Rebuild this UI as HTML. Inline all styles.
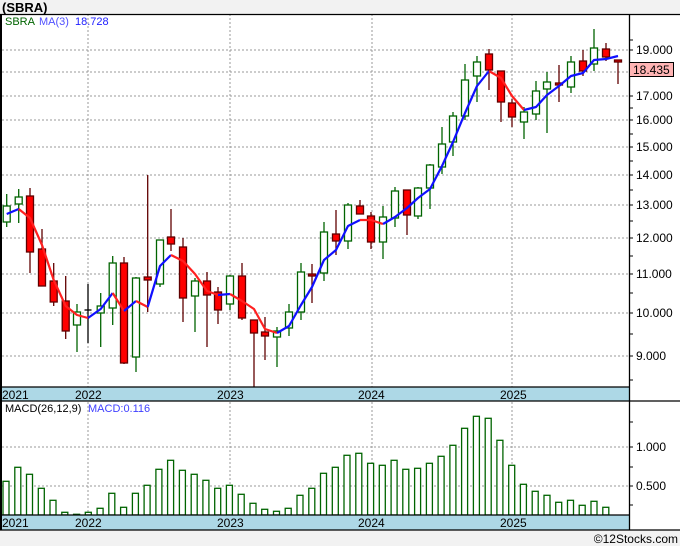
<!DOCTYPE html>
<html><head><meta charset="utf-8"><style>
html,body{margin:0;padding:0;background:#f2f2f2;}
svg{display:block;font-family:"Liberation Sans",sans-serif;}
</style></head><body>
<svg width="680" height="546" viewBox="0 0 680 546" xmlns="http://www.w3.org/2000/svg">
<rect x="0" y="0" width="680" height="546" fill="#f2f2f2"/>
<text x="2" y="12" font-size="13" font-weight="bold" fill="#000">(SBRA)</text>
<rect x="0" y="14" width="680" height="516" fill="#fff"/>
<g stroke="#999" stroke-width="1" stroke-dasharray="2,2" fill="none">
<line x1="2" y1="50" x2="629" y2="50"/><line x1="2" y1="72" x2="629" y2="72"/><line x1="2" y1="96" x2="629" y2="96"/>
<line x1="2" y1="120" x2="629" y2="120"/><line x1="2" y1="147" x2="629" y2="147"/><line x1="2" y1="175" x2="629" y2="175"/>
<line x1="2" y1="205" x2="629" y2="205"/><line x1="2" y1="238" x2="629" y2="238"/><line x1="2" y1="274" x2="629" y2="274"/>
<line x1="2" y1="313" x2="629" y2="313"/><line x1="2" y1="356" x2="629" y2="356"/>
<line x1="2" y1="447" x2="629" y2="447"/><line x1="2" y1="486" x2="629" y2="486"/>
<line x1="88" y1="14" x2="88" y2="530"/><line x1="230" y1="14" x2="230" y2="530"/>
<line x1="372" y1="14" x2="372" y2="530"/><line x1="512" y1="14" x2="512" y2="530"/>
</g>
<!-- candles -->
<g stroke-width="1.3">
<g stroke="#006400" fill="#fff">
<line x1="6.7" y1="194" x2="6.7" y2="227"/><rect x="3.2" y="206" width="7" height="16"/>
<line x1="18.7" y1="189" x2="18.7" y2="223"/><rect x="15.2" y="197" width="7" height="7"/>
<line x1="77" y1="304" x2="77" y2="352"/><rect x="73.5" y="312" width="7" height="13"/>
<line x1="100.7" y1="293" x2="100.7" y2="347"/><rect x="97.2" y="306" width="7" height="7"/>
<line x1="112.7" y1="256" x2="112.7" y2="325"/><rect x="109.2" y="263" width="7" height="45"/>
<line x1="136" y1="277" x2="136" y2="372"/><rect x="132.5" y="278" width="7" height="79"/>
<line x1="160" y1="240" x2="160" y2="287"/><rect x="156.5" y="240" width="7" height="44"/>
<line x1="195" y1="278" x2="195" y2="332"/><rect x="191.5" y="281" width="7" height="15"/>
<line x1="230" y1="275" x2="230" y2="310"/><rect x="226.5" y="276" width="7" height="28"/>
<line x1="277" y1="327" x2="277" y2="367"/><rect x="273.5" y="331" width="7" height="6"/>
<line x1="289" y1="304" x2="289" y2="336"/><rect x="285.5" y="312" width="7" height="16"/>
<line x1="301" y1="263" x2="301" y2="320"/><rect x="297.5" y="272" width="7" height="40"/>
<line x1="324" y1="222" x2="324" y2="281"/><rect x="320.5" y="232" width="7" height="41"/>
<line x1="348" y1="203" x2="348" y2="249"/><rect x="344.5" y="205" width="7" height="36"/>
<line x1="383" y1="206" x2="383" y2="259"/><rect x="379.5" y="217" width="7" height="25"/>
<line x1="395" y1="187" x2="395" y2="227"/><rect x="391.5" y="191" width="7" height="27"/>
<line x1="418" y1="187" x2="418" y2="219"/><rect x="414.5" y="188" width="7" height="28"/>
<line x1="430" y1="164" x2="430" y2="209"/><rect x="426.5" y="165" width="7" height="23"/>
<line x1="442" y1="127" x2="442" y2="174"/><rect x="438.5" y="144" width="7" height="23"/>
<line x1="453" y1="112" x2="453" y2="156"/><rect x="449.5" y="116" width="7" height="26"/>
<line x1="465" y1="64" x2="465" y2="120"/><rect x="461.5" y="80" width="7" height="36"/>
<line x1="477" y1="56" x2="477" y2="102"/><rect x="473.5" y="62" width="7" height="14"/>
<line x1="524" y1="107" x2="524" y2="139"/><rect x="520.5" y="112" width="7" height="10"/>
<line x1="536" y1="81" x2="536" y2="120"/><rect x="532.5" y="91" width="7" height="23"/>
<line x1="547" y1="72" x2="547" y2="133"/><rect x="543.5" y="82" width="7" height="7"/>
<line x1="571" y1="56" x2="571" y2="93"/><rect x="567.5" y="62" width="7" height="25"/>
<line x1="594" y1="29" x2="594" y2="71"/><rect x="590.5" y="48" width="7" height="16"/>
</g>
<g stroke="#600000" fill="#ff0000">
<line x1="30" y1="188" x2="30" y2="273"/><rect x="26.5" y="196" width="7" height="56"/>
<line x1="42" y1="229" x2="42" y2="286"/><rect x="38.5" y="249" width="7" height="37"/>
<line x1="53.7" y1="263" x2="53.7" y2="306"/><rect x="50.2" y="281" width="7" height="21"/>
<line x1="65.7" y1="276" x2="65.7" y2="339"/><rect x="62.2" y="301" width="7" height="30"/>
<line x1="124" y1="257" x2="124" y2="364"/><rect x="120.5" y="263" width="7" height="100"/>
<line x1="147.7" y1="175" x2="147.7" y2="312"/><rect x="144.2" y="277" width="7" height="3"/>
<line x1="171" y1="209" x2="171" y2="251"/><rect x="167.5" y="237" width="7" height="7"/>
<line x1="183" y1="238" x2="183" y2="322"/><rect x="179.5" y="247" width="7" height="51"/>
<line x1="207" y1="272" x2="207" y2="347"/><rect x="203.5" y="281" width="7" height="14"/>
<line x1="218" y1="287" x2="218" y2="324"/><rect x="214.5" y="292" width="7" height="18"/>
<line x1="242" y1="263" x2="242" y2="320"/><rect x="238.5" y="276" width="7" height="42"/>
<line x1="254" y1="320" x2="254" y2="387"/><rect x="250.5" y="320" width="7" height="13"/>
<line x1="265" y1="317" x2="265" y2="360"/><rect x="261.5" y="332" width="7" height="4"/>
<line x1="312" y1="264" x2="312" y2="303"/><rect x="308.5" y="274" width="7" height="2"/>
<line x1="336" y1="210" x2="336" y2="255"/><rect x="332.5" y="234" width="7" height="7"/>
<line x1="360" y1="200" x2="360" y2="214"/><rect x="356.5" y="206" width="7" height="8"/>
<line x1="371" y1="212" x2="371" y2="249"/><rect x="367.5" y="216" width="7" height="26"/>
<line x1="407" y1="190" x2="407" y2="235"/><rect x="403.5" y="190" width="7" height="25"/>
<line x1="489" y1="49" x2="489" y2="90"/><rect x="485.5" y="54" width="7" height="16"/>
<line x1="501" y1="71" x2="501" y2="122"/><rect x="497.5" y="71" width="7" height="31"/>
<line x1="512" y1="99" x2="512" y2="127"/><rect x="508.5" y="103" width="7" height="14"/>
<line x1="559" y1="65" x2="559" y2="102"/><rect x="555.5" y="83" width="7" height="2"/>
<line x1="583" y1="50" x2="583" y2="76"/><rect x="579.5" y="61" width="7" height="10"/>
<line x1="606" y1="43" x2="606" y2="61"/><rect x="602.5" y="49" width="7" height="8"/>
<line x1="618" y1="60" x2="618" y2="84"/><rect x="614.5" y="60" width="7" height="2"/>
</g>
<g stroke="#000"><line x1="88" y1="284" x2="88" y2="343"/><line x1="84.5" y1="310" x2="91.5" y2="310"/></g>
</g>
<!-- MA -->
<g fill="none" stroke-width="2.2" stroke-linejoin="round">
<polyline stroke="#1010ff" points="6.7,214 18.7,209"/>
<polyline stroke="#ff2020" points="18.7,209 30,218 42,245 53.7,280 65.7,306 77,315 88,318"/>
<polyline stroke="#1010ff" points="88,318 100.7,309 112.7,293"/>
<polyline stroke="#ff2020" points="112.7,293 124,311"/>
<polyline stroke="#1010ff" points="124,311 136,301"/>
<polyline stroke="#ff2020" points="136,301 147.7,307"/>
<polyline stroke="#1010ff" points="147.7,307 160,266 171,255"/>
<polyline stroke="#ff2020" points="171,255 183,261 195,274 207,291 218,295"/>
<polyline stroke="#1010ff" points="218,295 230,294"/>
<polyline stroke="#ff2020" points="230,294 242,301 254,309 265,329 277,333"/>
<polyline stroke="#1010ff" points="277,333 289,326 301,305 312,287 324,260 336,250 348,226 360,220"/>
<polyline stroke="#ff2020" points="360,220 371,220 383,224"/>
<polyline stroke="#1010ff" points="383,224 395,217 407,208 418,198 430,189 442,166 453,142 465,113 477,86 489,71"/>
<polyline stroke="#ff2020" points="489,71 501,78 512,96 524,110"/>
<polyline stroke="#1010ff" points="524,110 536,107 547,95 559,86 571,76 583,73 594,60 606,59 618,56"/>
</g>
<text x="5" y="25" font-size="11" fill="#006400">SBRA</text>
<text x="39" y="25" font-size="11" fill="#5050ff">MA(3)</text>
<text x="75" y="25" font-size="11" fill="#2020ff">18.728</text>
<!-- MACD bars -->
<g stroke="#006400" stroke-width="1.3" fill="#fff">
<rect x="3" y="481.3" width="6" height="33.7"/><rect x="14.8" y="467.3" width="6" height="47.7"/><rect x="26.5" y="474.3" width="6" height="40.7"/><rect x="38.3" y="488.3" width="6" height="26.7"/>
<rect x="50" y="500.3" width="6" height="14.7"/><rect x="61.8" y="512.3" width="6" height="2.7"/><rect x="73.6" y="514.3" width="6" height="0.7"/><rect x="85.3" y="512.3" width="6" height="2.7"/>
<rect x="97.1" y="508.3" width="6" height="6.7"/><rect x="108.8" y="493.3" width="6" height="21.7"/><rect x="120.6" y="507.3" width="6" height="7.7"/><rect x="132.4" y="493.3" width="6" height="21.7"/>
<rect x="144.1" y="485.3" width="6" height="29.7"/><rect x="155.9" y="469.3" width="6" height="45.7"/><rect x="167.6" y="460.3" width="6" height="54.7"/><rect x="179.4" y="470.3" width="6" height="44.7"/>
<rect x="191.2" y="474.3" width="6" height="40.7"/><rect x="202.9" y="480.3" width="6" height="34.7"/><rect x="214.7" y="488.3" width="6" height="26.7"/><rect x="226.4" y="485.3" width="6" height="29.7"/>
<rect x="238.2" y="494.3" width="6" height="20.7"/><rect x="250" y="503.3" width="6" height="11.7"/><rect x="261.7" y="509.3" width="6" height="5.7"/><rect x="273.5" y="511.3" width="6" height="3.7"/>
<rect x="285.2" y="508.3" width="6" height="6.7"/><rect x="297" y="495.3" width="6" height="19.7"/><rect x="308.8" y="488.3" width="6" height="26.7"/><rect x="320.5" y="473.3" width="6" height="41.7"/>
<rect x="332.3" y="467.3" width="6" height="47.7"/><rect x="344" y="455.3" width="6" height="59.7"/><rect x="355.8" y="453.3" width="6" height="61.7"/><rect x="367.6" y="463.3" width="6" height="51.7"/>
<rect x="379.3" y="465.3" width="6" height="49.7"/><rect x="391.1" y="460.3" width="6" height="54.7"/><rect x="402.8" y="469.3" width="6" height="45.7"/><rect x="414.6" y="468.3" width="6" height="46.7"/>
<rect x="426.4" y="463.3" width="6" height="51.7"/><rect x="438.1" y="456.3" width="6" height="58.7"/><rect x="449.9" y="445.3" width="6" height="69.7"/><rect x="461.6" y="428.3" width="6" height="86.7"/>
<rect x="473.4" y="416.3" width="6" height="98.7"/><rect x="485.2" y="418.3" width="6" height="96.7"/><rect x="496.9" y="440.3" width="6" height="74.7"/><rect x="508.7" y="465.3" width="6" height="49.7"/>
<rect x="520.4" y="484.3" width="6" height="30.7"/><rect x="532.2" y="491.3" width="6" height="23.7"/><rect x="544" y="495.3" width="6" height="19.7"/><rect x="555.7" y="502.3" width="6" height="12.7"/>
<rect x="567.5" y="500.3" width="6" height="14.7"/><rect x="579.2" y="505.3" width="6" height="9.7"/><rect x="591" y="501.3" width="6" height="13.7"/><rect x="602.8" y="507.3" width="6" height="7.7"/>
</g>
<text x="5" y="412" font-size="11" fill="#000">MACD(26,12,9)</text>
<text x="88" y="412" font-size="11" fill="#4040ff">MACD:0.116</text>
<!-- date bands -->
<rect x="0" y="387" width="629" height="14" fill="#add8e6"/>
<rect x="0" y="515" width="629" height="15" fill="#add8e6"/>
<g stroke="#000" stroke-width="1.3">
<line x1="0" y1="14.5" x2="680" y2="14.5"/>
<line x1="0" y1="387" x2="629" y2="387"/>
<line x1="0" y1="401" x2="680" y2="401"/>
<line x1="0" y1="515" x2="629" y2="515"/>
<line x1="0" y1="530" x2="680" y2="530"/>
<line x1="629.5" y1="14" x2="629.5" y2="530"/>
</g>
<rect x="0" y="14" width="2" height="516" fill="#000"/>
<g font-size="12" fill="#000">
<text x="2" y="399">2021</text><text x="75" y="399">2022</text><text x="217" y="399">2023</text><text x="358" y="399">2024</text><text x="500" y="399">2025</text>
<text x="2" y="527">2021</text><text x="75" y="527">2022</text><text x="217" y="527">2023</text><text x="358" y="527">2024</text><text x="500" y="527">2025</text>
</g>
<g stroke="#000" stroke-width="1">
<line x1="629" y1="40" x2="633" y2="40"/><line x1="629" y1="50" x2="633" y2="50"/><line x1="629" y1="96" x2="633" y2="96"/><line x1="629" y1="108" x2="633" y2="108"/>
<line x1="629" y1="120" x2="633" y2="120"/><line x1="629" y1="134" x2="633" y2="134"/><line x1="629" y1="147" x2="633" y2="147"/><line x1="629" y1="161" x2="633" y2="161"/>
<line x1="629" y1="175" x2="633" y2="175"/><line x1="629" y1="190" x2="633" y2="190"/><line x1="629" y1="205" x2="633" y2="205"/><line x1="629" y1="221" x2="633" y2="221"/>
<line x1="629" y1="238" x2="633" y2="238"/><line x1="629" y1="256" x2="633" y2="256"/><line x1="629" y1="274" x2="633" y2="274"/><line x1="629" y1="293" x2="633" y2="293"/>
<line x1="629" y1="313" x2="633" y2="313"/><line x1="629" y1="334" x2="633" y2="334"/><line x1="629" y1="356" x2="633" y2="356"/><line x1="629" y1="380" x2="633" y2="380"/>
<line x1="629" y1="422" x2="633" y2="422"/><line x1="629" y1="447" x2="633" y2="447"/><line x1="629" y1="467" x2="633" y2="467"/><line x1="629" y1="486" x2="633" y2="486"/><line x1="629" y1="505" x2="633" y2="505"/>
</g>
<g font-size="12" fill="#000">
<text x="636" y="54">19.000</text><text x="636" y="100">17.000</text><text x="636" y="124">16.000</text><text x="636" y="151">15.000</text>
<text x="636" y="179">14.000</text><text x="636" y="209">13.000</text><text x="636" y="242">12.000</text><text x="636" y="278">11.000</text>
<text x="636" y="317">10.000</text><text x="636" y="360">9.000</text>
<text x="636" y="451">1.000</text><text x="636" y="490">0.500</text>
</g>
<rect x="629.5" y="62.5" width="44" height="14" fill="#ffb4b4" stroke="#000" stroke-width="1"/>
<text x="633" y="74" font-size="12" fill="#000">18.435</text>
<text x="678" y="543" font-size="12" fill="#000" text-anchor="end">©12Stocks.com</text>
</svg>
</body></html>
